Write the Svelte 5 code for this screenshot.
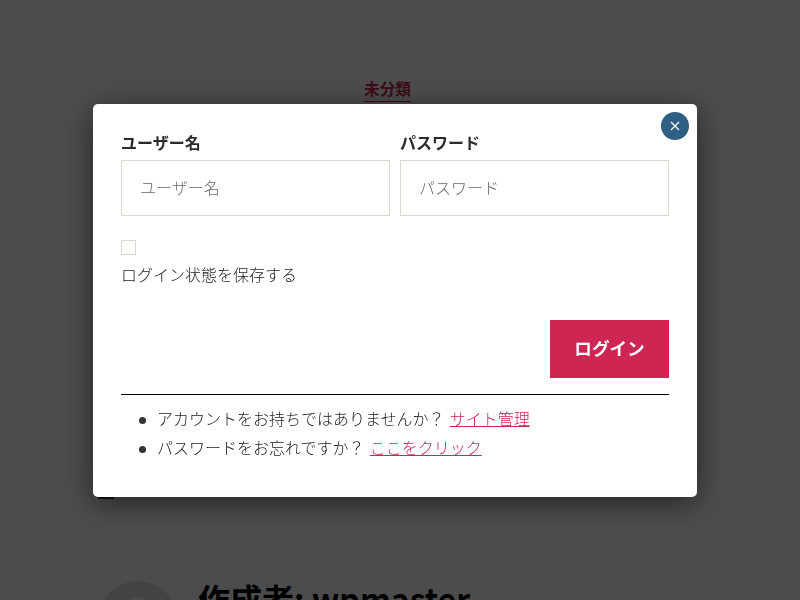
<script lang="ts">
	let username = $state('')
	let password = $state('')
	let remember = $state(false)
</script>

<div class="page">
	<article class="post">
		<div class="category"><a href="#top">未分類</a></div>
		<div class="tag-mark"></div>
		<div class="author">
			<svg class="avatar" viewBox="0 0 80 80" width="80" height="80" aria-hidden="true">
				<circle cx="40" cy="40" r="40" fill="#e2e2e2" />
				<circle cx="40" cy="31" r="15" fill="#fafafa" />
			</svg>
			<h2>作成者: wpmaster</h2>
		</div>
	</article>
</div>

<div class="overlay">
	<div class="modal">
		<button class="close" type="button" aria-label="閉じる">
			<svg viewBox="0 0 10 10" width="10" height="10" aria-hidden="true">
				<path d="M1 1 9 9M9 1 1 9" stroke="#fff" stroke-width="1.2" fill="none" />
			</svg>
		</button>
		<form onsubmit={(e) => e.preventDefault()}>
			<div class="fields">
				<div class="field">
					<label for="username">ユーザー名</label>
					<input id="username" type="text" placeholder="ユーザー名" bind:value={username} />
				</div>
				<div class="field">
					<label for="password">パスワード</label>
					<input id="password" type="password" placeholder="パスワード" bind:value={password} />
				</div>
			</div>
			<div class="remember">
				<input id="remember" type="checkbox" bind:checked={remember} />
				<label for="remember">ログイン状態を保存する</label>
			</div>
			<div class="actions">
				<button class="submit" type="submit">ログイン</button>
			</div>
		</form>
		<ul class="links">
			<li>アカウントをお持ちではありませんか？ <a href="#top">サイト管理</a></li>
			<li>パスワードをお忘れですか？ <a href="#top">ここをクリック</a></li>
		</ul>
	</div>
</div>

<style>
	:global(body) {
		background: #fff;
		font-family: "Noto Sans CJK JP", "Liberation Sans", sans-serif;
		color: #333;
		overflow: hidden;
	}
	.page {
		height: 600px;
		overflow: hidden;
	}
	.post {
		padding: 79px 125px 0 100px;
	}
	.category {
		text-align: center;
		font-size: 15.7px;
		line-height: 19px;
		font-weight: 700;
	}
	.category a {
		display: inline-block;
		color: #cd2653;
		text-decoration: none;
		border-bottom: 1px solid currentColor;
		padding-bottom: 3px;
	}
	.tag-mark {
		width: 16px;
		height: 3px;
		margin: 394px 0 0 -2px;
		background: #444;
	}
	.author {
		display: flex;
		gap: 20px;
		align-items: flex-start;
		margin: 82px 0 0 -2px;
	}
	.avatar {
		flex: none;
	}
	h2 {
		margin: -6px 0 0;
		font-size: 32px;
		line-height: 46px;
		font-weight: 700;
		color: #000;
		white-space: nowrap;
	}
	.overlay {
		position: fixed;
		inset: 0;
		background: rgba(0, 0, 0, 0.7);
		display: flex;
		align-items: flex-start;
		justify-content: center;
		padding-top: 104px;
		box-sizing: border-box;
	}
	.modal {
		position: relative;
		box-sizing: border-box;
		width: 604px;
		height: 393px;
		margin-left: -10px;
		padding: 28px 28px 0;
		background: #fff;
		border-radius: 5px;
		box-shadow: 0 6px 30px rgba(0, 0, 0, 0.55);
	}
	.close {
		position: absolute;
		top: 8px;
		right: 8px;
		width: 28px;
		height: 28px;
		padding: 0;
		border: none;
		border-radius: 50%;
		background: #2e5f85;
		display: flex;
		align-items: center;
		justify-content: center;
	}
	.fields {
		display: flex;
		gap: 10px;
	}
	.field {
		flex: 1;
		min-width: 0;
	}
	.field label {
		display: block;
		font-size: 16px;
		line-height: 21px;
		font-weight: 700;
		color: #2b2b2b;
		margin-bottom: 7px;
	}
	.field input {
		display: block;
		box-sizing: border-box;
		width: 100%;
		height: 56px;
		padding: 0 18px 3px;
		border: 1px solid #dcd7ca;
		border-radius: 0;
		background: #fff;
		font-family: inherit;
		font-weight: 300;
		font-size: 16px;
		color: #333;
		outline: none;
	}
	.field input::placeholder {
		color: #6a6a6a;
		opacity: 1;
	}
	.remember {
		margin-top: 24px;
	}
	.remember input {
		display: block;
		appearance: none;
		box-sizing: border-box;
		width: 15px;
		height: 15px;
		margin: 0;
		border: 1px solid #dcd7ca;
		background: #fff;
	}
	.remember label {
		display: block;
		margin-top: 7px;
		font-size: 16px;
		font-weight: 300;
		line-height: 24px;
		color: #222;
	}
	.actions {
		display: flex;
		justify-content: flex-end;
		margin-top: 34px;
		padding-bottom: 16px;
		border-bottom: 1px solid #000;
	}
	.submit {
		width: 119px;
		height: 58px;
		padding: 0 0 3px;
		border: none;
		background: #cd2653;
		color: #fff;
		font-family: inherit;
		font-size: 17.6px;
		font-weight: 700;
	}
	.links {
		margin: 9px 0 0;
		padding: 0 0 0 35px;
		list-style: none;
		font-size: 16px;
		font-weight: 300;
		line-height: 29px;
		color: #222;
		word-spacing: 1.6px;
	}
	.links li::before {
		content: "";
		display: inline-block;
		width: 7px;
		height: 7px;
		margin: 0 11px 1px -17px;
		border-radius: 50%;
		background: #333;
	}
	.links a {
		color: #cd2653;
		text-decoration: underline;
	}
</style>
